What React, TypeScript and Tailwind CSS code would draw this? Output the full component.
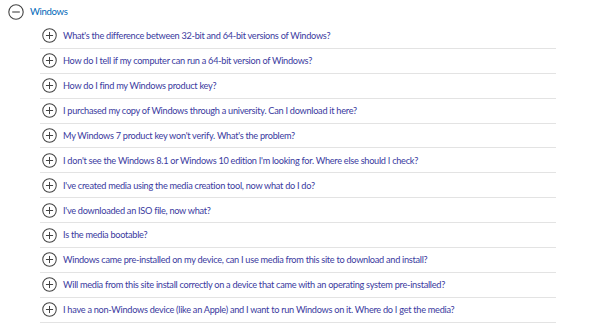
import { useState } from "react"

const questions = [
	"What's the difference between 32-bit and 64-bit versions of Windows?",
	"How do I tell if my computer can run a 64-bit version of Windows?",
	"How do I find my Windows product key?",
	"I purchased my copy of Windows through a university. Can I download it here?",
	"My Windows 7 product key won't verify. What's the problem?",
	"I don't see the Windows 8.1 or Windows 10 edition I'm looking for. Where else should I check?",
	"I've created media using the media creation tool, now what do I do?",
	"I've downloaded an ISO file, now what?",
	"Is the media bootable?",
	"Windows came pre-installed on my device, can I use media from this site to download and install?",
	"Will media from this site install correctly on a device that came with an operating system pre-installed?",
	"I have a non-Windows device (like an Apple) and I want to run Windows on it. Where do I get the media?",
]

function CircleIcon({ open, size }: { open: boolean; size: number }) {
	return (
		<svg width={size} height={size} viewBox="0 0 16 16" fill="none" stroke="#444" strokeWidth="1.1">
			<circle cx="8" cy="8" r="7.2" />
			<line x1="4.2" y1="8" x2="11.8" y2="8" />
			{!open && <line x1="8" y1="4.2" x2="8" y2="11.8" />}
		</svg>
	)
}

export default function App() {
	const [expanded, setExpanded] = useState(true)
	const [openItem, setOpenItem] = useState<number | null>(null)

	return (
		<div
			className="w-[600px] h-[324px] overflow-hidden bg-white"
			style={{ fontFamily: "Lato, 'Noto Sans', sans-serif" }}
		>
			{/* Section header */}
			<button
				onClick={() => setExpanded(!expanded)}
				className="flex items-center gap-[6px] pl-[8px] h-[23px]"
			>
				<CircleIcon open={expanded} size={16} />
				<span className="text-[9.6px] tracking-[-0.35px] text-[#0067b8] leading-none">Windows</span>
			</button>

			{expanded && (
				<ul className="ml-[40px] mt-[1px] w-[516px]">
					{questions.map((q, i) => (
						<li key={i} className="border-b border-[#e3e3e3] h-[24.9px] flex items-center">
							<button
								onClick={() => setOpenItem(openItem === i ? null : i)}
								className="flex items-center gap-[6px] pl-[2px] text-left"
							>
								<CircleIcon open={openItem === i} size={15} />
								<span className="text-[9.2px] tracking-[-0.28px] text-[#3a3aa0] leading-none whitespace-nowrap">
									{q}
								</span>
							</button>
						</li>
					))}
				</ul>
			)}
		</div>
	)
}
